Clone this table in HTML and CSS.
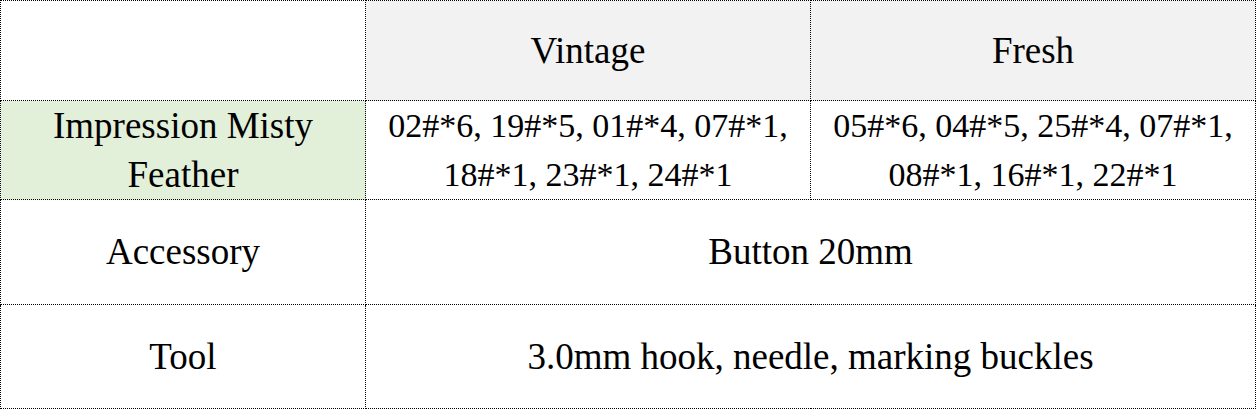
FILE: index.html
```html
<!DOCTYPE html>
<html>
<head>
<meta charset="utf-8">
<link rel="stylesheet" href="styles.css">
</head>
<body>
<table class="kit">
  <colgroup>
    <col class="c-label">
    <col class="c-val">
    <col class="c-val">
  </colgroup>
  <tr class="r-head">
    <td class="blank"></td>
    <td class="head">Vintage</td>
    <td class="head">Fresh</td>
  </tr>
  <tr class="r-yarn">
    <td class="yarn">Impression Misty<br>Feather</td>
    <td class="codes">02#*6, 19#*5, 01#*4, 07#*1,<br>18#*1, 23#*1, 24#*1</td>
    <td class="codes">05#*6, 04#*5, 25#*4, 07#*1,<br>08#*1, 16#*1, 22#*1</td>
  </tr>
  <tr class="r-acc">
    <td>Accessory</td>
    <td colspan="2">Button 20mm</td>
  </tr>
  <tr class="r-tool">
    <td>Tool</td>
    <td colspan="2">3.0mm hook, needle, marking buckles</td>
  </tr>
</table>
</body>
</html>
```
FILE: styles.css
```css
html, body {
  margin: 0;
  padding: 0;
  background: #ffffff;
}

.kit {
  width: 1256px;
  border-collapse: collapse;
  table-layout: fixed;
  font-family: "Liberation Serif", "Times New Roman", serif;
  font-size: 37px;
  line-height: 50px;
  color: #000;
}

.c-label { width: 365px; }
.c-val { width: 445px; }

.kit td {
  border: 1px dotted #000;
  text-align: center;
  vertical-align: middle;
  padding: 0;
}

.r-head { height: 100px; }
.r-yarn { height: 99px; }
.r-acc { height: 105px; }
.r-tool { height: 104px; }

.r-yarn td { line-height: 49px; }

.head { background: #f2f2f2; }
.yarn { background: #e2efd9; }

.codes { font-size: 34px; }
```
